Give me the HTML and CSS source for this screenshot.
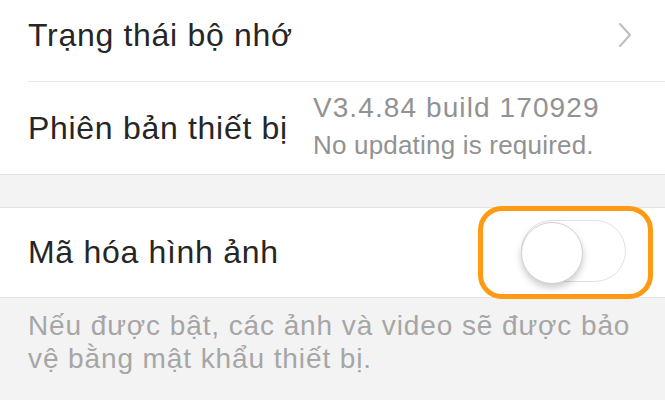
FILE: index.html
```html
<!DOCTYPE html>
<html lang="vi">
<head>
  <meta charset="UTF-8">
  <title>Cài đặt thiết bị</title>
  <link rel="stylesheet" href="styles.css">
</head>
<body>
  <div class="group">
    <div class="row row-link">
      <span class="label">Trạng thái bộ nhớ</span>
      <svg class="chevron" width="14" height="26" viewBox="0 0 14 26">
        <path d="M2 2 L12 13 L2 24" fill="none" stroke="#bdbdc2" stroke-width="2" stroke-linecap="round" stroke-linejoin="round"/>
      </svg>
    </div>
    <div class="row row-version">
      <span class="label">Phiên bản thiết bị</span>
      <div class="version">
        <div class="version-num">V3.4.84 build 170929</div>
        <div class="version-note">No updating is required.</div>
      </div>
    </div>
  </div>

  <div class="group group-switch">
    <div class="row row-switch">
      <span class="label">Mã hóa hình ảnh</span>
      <div class="highlight">
        <div class="switch">
          <div class="knob"></div>
        </div>
      </div>
    </div>
  </div>

  <p class="hint">Nếu được bật, các ảnh và video sẽ được bảo vệ bằng mật khẩu thiết bị.</p>
</body>
</html>
```

FILE: styles.css
```css
body {
  margin: 0;
  background: #f3f3f3;
  font-family: "Liberation Sans", Arial, sans-serif;
  color: #262626;
}

.group {
  background: #fff;
  border-bottom: 1px solid #e2e2e2;
}

.row {
  display: flex;
  align-items: center;
  padding-left: 28px;
}

.label {
  font-size: 32px;
  letter-spacing: 0.7px;
}

.row-link {
  height: 71px;
  padding-bottom: 10px;
  padding-left: 0;
  padding-right: 33px;
  margin-left: 28px;
  justify-content: space-between;
  border-bottom: 1px solid #e8e8e8;
}

.chevron {
  margin-top: -2px;
}

.row-version {
  height: 92px;
}

.version {
  margin-left: 25px;
  margin-top: -3px;
  color: #929292;
}

.version-num {
  font-size: 28px;
  letter-spacing: 1.1px;
  margin-bottom: 6px;
}

.version-note {
  font-size: 26px;
  letter-spacing: 0.2px;
}

.group-switch {
  margin-top: 32px;
  border-top: 1px solid #e2e2e2;
}

.row-switch {
  height: 89px;
  justify-content: space-between;
}

.label-switch {
  margin-top: -2px;
}

.highlight {
  border: 5px solid #ff9a12;
  border-radius: 24px;
  padding: 9px 22px 12px 38px;
  margin-right: 12px;
}

.switch {
  width: 103px;
  height: 60px;
  border: 1px solid #e2e2e2;
  border-radius: 31px;
  background: #fff;
  position: relative;
}

.knob {
  position: absolute;
  left: -1px;
  top: 1px;
  width: 60px;
  height: 60px;
  border-radius: 50%;
  background: #fff;
  border: 1px solid #d2d2d2;
  box-shadow: 0 4px 7px rgba(0, 0, 0, 0.2);
}

.hint {
  margin: 0;
  padding: 11px 20px 0 28px;
  font-size: 28px;
  line-height: 33px;
  letter-spacing: 0.9px;
  color: #a6a6a6;
}
```
